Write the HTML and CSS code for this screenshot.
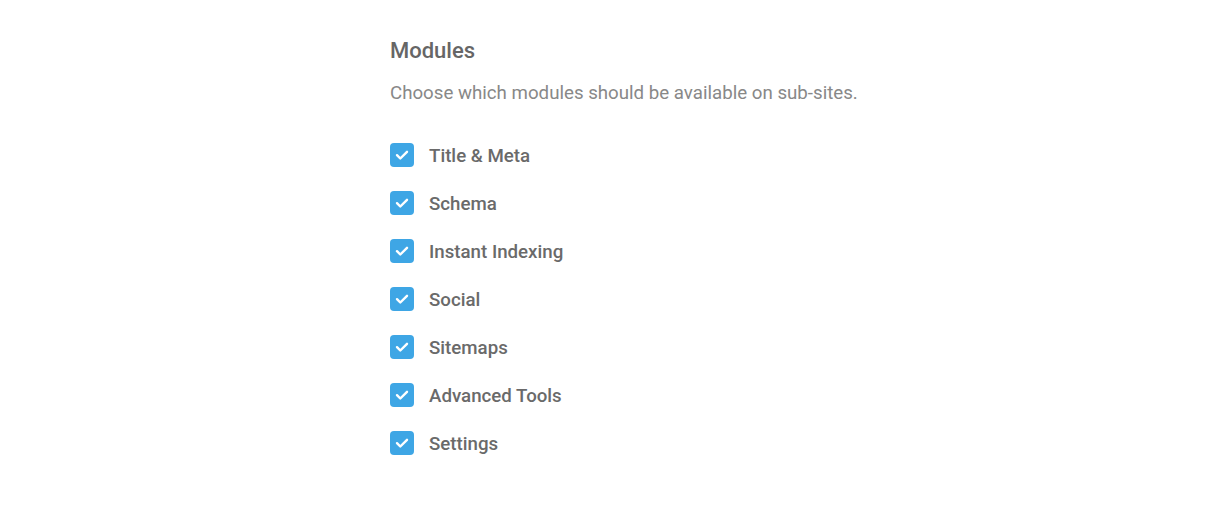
FILE: index.html
```html
<!DOCTYPE html>
<html>
<head>
<meta charset="utf-8">
<link rel="stylesheet" href="styles.css">
</head>
<body>
<div class="panel">
  <h2 class="title">Modules</h2>
  <p class="desc">Choose which modules should be available on sub-sites.</p>
  <ul class="modules">
    <li class="item"><span class="box"><svg viewBox="0 0 24 24" width="24" height="24"><path d="M7 12.2l3.3 3.3L17 8.8" fill="none" stroke="#fff" stroke-width="2.4" stroke-linecap="round" stroke-linejoin="round"/></svg></span><span class="label">Title &amp; Meta</span></li>
    <li class="item"><span class="box"><svg viewBox="0 0 24 24" width="24" height="24"><path d="M7 12.2l3.3 3.3L17 8.8" fill="none" stroke="#fff" stroke-width="2.4" stroke-linecap="round" stroke-linejoin="round"/></svg></span><span class="label">Schema</span></li>
    <li class="item"><span class="box"><svg viewBox="0 0 24 24" width="24" height="24"><path d="M7 12.2l3.3 3.3L17 8.8" fill="none" stroke="#fff" stroke-width="2.4" stroke-linecap="round" stroke-linejoin="round"/></svg></span><span class="label">Instant Indexing</span></li>
    <li class="item"><span class="box"><svg viewBox="0 0 24 24" width="24" height="24"><path d="M7 12.2l3.3 3.3L17 8.8" fill="none" stroke="#fff" stroke-width="2.4" stroke-linecap="round" stroke-linejoin="round"/></svg></span><span class="label">Social</span></li>
    <li class="item"><span class="box"><svg viewBox="0 0 24 24" width="24" height="24"><path d="M7 12.2l3.3 3.3L17 8.8" fill="none" stroke="#fff" stroke-width="2.4" stroke-linecap="round" stroke-linejoin="round"/></svg></span><span class="label">Sitemaps</span></li>
    <li class="item"><span class="box"><svg viewBox="0 0 24 24" width="24" height="24"><path d="M7 12.2l3.3 3.3L17 8.8" fill="none" stroke="#fff" stroke-width="2.4" stroke-linecap="round" stroke-linejoin="round"/></svg></span><span class="label">Advanced Tools</span></li>
    <li class="item"><span class="box"><svg viewBox="0 0 24 24" width="24" height="24"><path d="M7 12.2l3.3 3.3L17 8.8" fill="none" stroke="#fff" stroke-width="2.4" stroke-linecap="round" stroke-linejoin="round"/></svg></span><span class="label">Settings</span></li>
  </ul>
</div>
</body>
</html>
```
FILE: styles.css
```css
html, body {
  margin: 0;
  padding: 0;
  background: #fff;
}
body {
  font-family: Roboto, "Liberation Sans", sans-serif;
  color: #666;
}
.panel {
  width: 500px;
  padding: 38px 0 0 0;
  margin-left: 390px;
}
.title {
  margin: 0;
  font-size: 22px;
  font-weight: 500;
  line-height: 26px;
  color: #666;
}
.desc {
  margin: 16px 0 0 0;
  font-size: 18.7px;
  line-height: 26px;
  color: #888;
  white-space: nowrap;
}
.modules {
  list-style: none;
  margin: 37px 0 0 0;
  padding: 0;
  display: flex;
  flex-direction: column;
  gap: 24px;
}
.item {
  display: flex;
  align-items: center;
  gap: 15px;
  height: 24px;
}
.box {
  width: 24px;
  height: 24px;
  border-radius: 4px;
  background: #3ea6e5;
  display: flex;
  flex: none;
}
.label {
  padding-top: 2px;
  font-size: 18.7px;
  font-weight: 500;
  color: #6a6a6a;
}
```
